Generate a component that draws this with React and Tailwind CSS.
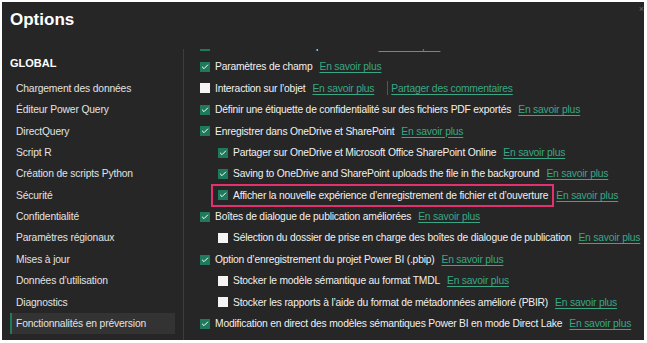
import { Check } from 'lucide-react';

const sidebarItems = [
  'Chargement des données',
  'Éditeur Power Query',
  'DirectQuery',
  'Script R',
  'Création de scripts Python',
  'Sécurité',
  'Confidentialité',
  'Paramètres régionaux',
  'Mises à jour',
  'Données d’utilisation',
  'Diagnostics',
  'Fonctionnalités en préversion',
];

const rows = [
  { label: 'Visuel d’indicateurs de performance', checked: true, link: true },
  { label: 'Paramètres de champ', checked: true, link: true },
  { label: 'Interaction sur l’objet', checked: false, link: true, extra: 'Partager des commentaires' },
  { label: 'Définir une étiquette de confidentialité sur des fichiers PDF exportés', checked: true, link: true },
  { label: 'Enregistrer dans OneDrive et SharePoint', checked: true, link: true },
  { label: 'Partager sur OneDrive et Microsoft Office SharePoint Online', checked: true, link: true, nested: true },
  { label: 'Saving to OneDrive and SharePoint uploads the file in the background', checked: true, link: true, nested: true },
  { label: 'Afficher la nouvelle expérience d’enregistrement de fichier et d’ouverture', checked: true, link: true, nested: true, highlight: true },
  { label: 'Boîtes de dialogue de publication améliorées', checked: true, link: true },
  { label: 'Sélection du dossier de prise en charge des boîtes de dialogue de publication', checked: false, link: true, nested: true },
  { label: 'Option d’enregistrement du projet Power BI (.pbip)', checked: true, link: true },
  { label: 'Stocker le modèle sémantique au format TMDL', checked: false, link: true, nested: true },
  { label: 'Stocker les rapports à l’aide du format de métadonnées amélioré (PBIR)', checked: false, link: true, nested: true },
  { label: 'Modification en direct des modèles sémantiques Power BI en mode Direct Lake', checked: true, link: true },
  { label: 'Mode de requête', checked: true, link: true },
];

function Box({ checked }) {
  if (checked) {
    return (
      <span className="w-[10px] h-[10px] shrink-0 bg-[#1f7a5d] flex items-center justify-center">
        <Check size={8} strokeWidth={3} className="text-white" />
      </span>
    );
  }
  return <span className="w-[10px] h-[10px] shrink-0 bg-[#f4f4f4]" />;
}

function Link({ children }) {
  return <span className="text-[#38a884] underline underline-offset-2 decoration-[#38a884]">{children}</span>;
}

function Row({ row }) {
  const inner = (
    <div className="flex items-center gap-[5px]">
      <Box checked={row.checked} />
      <span className="whitespace-nowrap">{row.label}</span>
    </div>
  );
  return (
    <div className={`h-[21.4px] flex items-center whitespace-nowrap ${row.nested ? 'pl-[34px]' : 'pl-[16px]'}`}>
      {row.highlight ? (
        <div className="border-2 border-[#e3306f] h-[23px] flex items-center -ml-[7px] pl-[5px] pr-[4px]">{inner}</div>
      ) : (
        inner
      )}
      {row.link && (
        <span className={row.highlight ? 'ml-[2px]' : 'ml-[7px]'}>
          <Link>En savoir plus</Link>
        </span>
      )}
      {row.extra && (
        <>
          <span className="w-px h-[14px] bg-[#555] ml-[13px] mr-[3px]" />
          <Link>{row.extra}</Link>
        </>
      )}
    </div>
  );
}

export default function App() {
  return (
    <div className="w-[647px] h-[343px] bg-white overflow-hidden" style={{ fontFamily: '"Liberation Sans", Arial, sans-serif' }}>
      <div className="ml-[2px] mt-[2px] w-[642px] h-[338px] bg-[#262626] text-[#ececec] flex flex-col overflow-hidden relative">
        <span className="absolute right-[0px] top-[1px] text-[#666] text-[9px]">×</span>
        <div className="h-[45px] pl-[8px] pt-[5px] text-[17px] font-semibold text-white">Options</div>
        <div className="flex flex-1 min-h-0">
          <div className="w-[181px] shrink-0 text-[10.3px] tracking-[-0.15px] text-[#e2e2e2]">
            <div className="h-[21.4px] mt-[6px] flex items-center pl-[8px] font-bold text-[11px] tracking-normal text-white">GLOBAL</div>
            <div className="mt-[3.4px]">
              {sidebarItems.map((item, i) => {
                const active = i === sidebarItems.length - 1;
                return (
                  <div
                    key={item}
                    className={`h-[21.4px] flex items-center mr-[8px] ${active ? 'ml-[8px] pl-[4px] bg-[#333333] border-l-2 border-[#1f7a5d]' : 'ml-[8px] pl-[6px]'}`}
                  >
                    {item}
                  </div>
                );
              })}
            </div>
          </div>
          <div className="flex-1 border-l border-[#3d3d3d] mt-[2px] overflow-hidden text-[10.3px] tracking-[-0.2px] text-[#f0f0f0]">
            <div className="-mt-[14px]">
              {rows.map((row) => (
                <Row key={row.label} row={row} />
              ))}
            </div>
          </div>
        </div>
      </div>
    </div>
  );
}
